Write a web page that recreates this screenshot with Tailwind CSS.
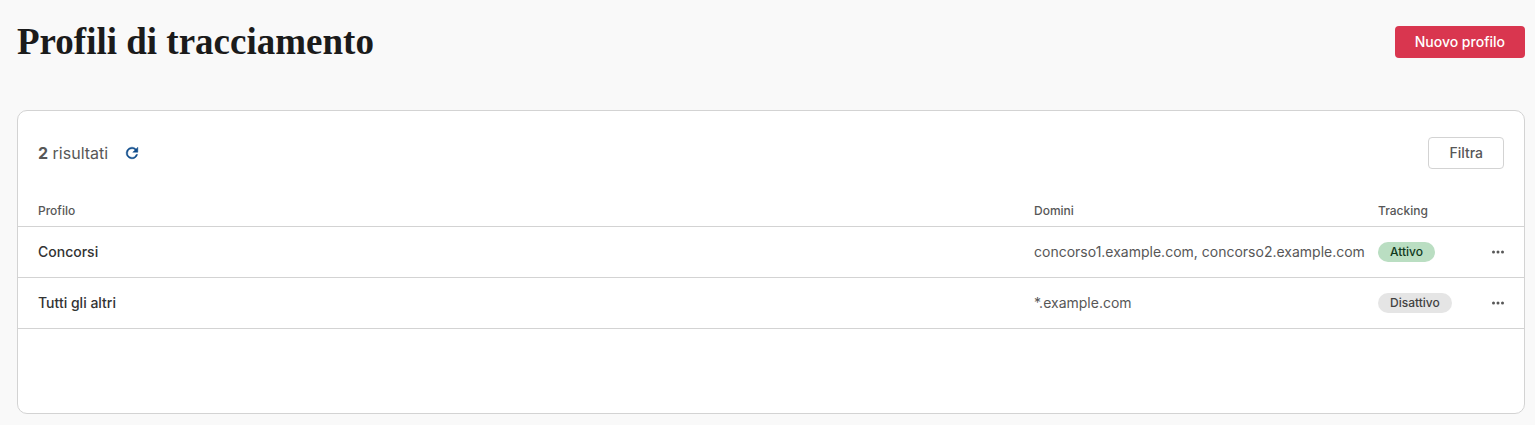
<!DOCTYPE html>
<html lang="it">
<head>
    <meta charset="UTF-8">
    <meta name="viewport" content="width=device-width, initial-scale=1.0">
    <title>Profili di tracciamento</title>
    <!-- Tailwind CSS CDN -->
    <script src="https://cdn.jsdelivr.net/npm/@tailwindcss/browser@4"></script>
</head>
<body class="bg-[#f9f9f9] font-['Inter',sans-serif] text-sm text-[#575757]">
    <div class="pl-[17px] pr-[10px] pt-[26px] pb-[11px]">
        <!-- Page header -->
        <header class="flex items-center justify-between mb-[52px]">
            <h1 class="font-['Liberation_Serif',serif] text-[37px] leading-8 font-bold text-[#1b1b1b]">Profili di tracciamento</h1>
            <button type="button" class="h-8 px-5 rounded-[4px] bg-[#d9364f] font-medium text-white">Nuovo profilo</button>
        </header>

        <!-- Results card -->
        <main class="rounded-[10px] border border-[#d3d3d3] bg-white pt-[26px] pb-[84px]">
            <div class="flex items-center justify-between px-5 mb-[27px]">
                <div class="flex items-center gap-4">
                    <p class="text-base"><strong class="font-bold">2</strong> risultati</p>
                    <button type="button" aria-label="Aggiorna" class="text-[#0f4c8c]">
                        <svg class="size-4" viewBox="1 1 22 22" fill="currentColor" stroke="currentColor" stroke-width="0.6">
                            <path d="M17.65 6.35A7.96 7.96 0 0 0 12 4a8 8 0 1 0 7.73 10h-2.08A6 6 0 1 1 12 6c1.66 0 3.14.69 4.22 1.78L13 11h7V4z"/>
                        </svg>
                    </button>
                </div>
                <button type="button" class="h-8 px-5 rounded-[4px] border border-[#d3d3d3] bg-white font-medium">Filtra</button>
            </div>

            <table class="w-full text-left">
                <thead>
                    <tr class="h-[30px] border-b border-[#d3d3d3] text-xs">
                        <th scope="col" class="pl-5 font-medium">Profilo</th>
                        <th scope="col" class="w-[344px] font-medium">Domini</th>
                        <th scope="col" class="w-[90px] font-medium">Tracking</th>
                        <th scope="col" class="w-[56px]"></th>
                    </tr>
                </thead>
                <tbody>
                    <tr class="h-[51px] border-b border-[#d3d3d3]">
                        <td class="pl-5 font-medium text-[#333333]">Concorsi</td>
                        <td class="whitespace-nowrap">concorso1.example.com, concorso2.example.com</td>
                        <td><span class="inline-block rounded-full bg-[#badec2] px-3 text-xs leading-5 font-medium text-[#10381c]">Attivo</span></td>
                        <td class="pr-5">
                            <button type="button" aria-label="Azioni per Concorsi" class="ml-auto block">
                                <svg class="w-3 h-4" viewBox="0 0 12 16" fill="currentColor">
                                    <circle cx="1.5" cy="8" r="1.5"/>
                                    <circle cx="6" cy="8" r="1.5"/>
                                    <circle cx="10.5" cy="8" r="1.5"/>
                                </svg>
                            </button>
                        </td>
                    </tr>
                    <tr class="h-[51px] border-b border-[#d3d3d3]">
                        <td class="pl-5 font-medium text-[#333333]">Tutti gli altri</td>
                        <td class="whitespace-nowrap">*.example.com</td>
                        <td><span class="inline-block rounded-full bg-[#e5e5e5] px-3 text-xs leading-5 font-medium text-[#424242]">Disattivo</span></td>
                        <td class="pr-5">
                            <button type="button" aria-label="Azioni per Tutti gli altri" class="ml-auto block">
                                <svg class="w-3 h-4" viewBox="0 0 12 16" fill="currentColor">
                                    <circle cx="1.5" cy="8" r="1.5"/>
                                    <circle cx="6" cy="8" r="1.5"/>
                                    <circle cx="10.5" cy="8" r="1.5"/>
                                </svg>
                            </button>
                        </td>
                    </tr>
                </tbody>
            </table>
        </main>
    </div>
</body>
</html>
